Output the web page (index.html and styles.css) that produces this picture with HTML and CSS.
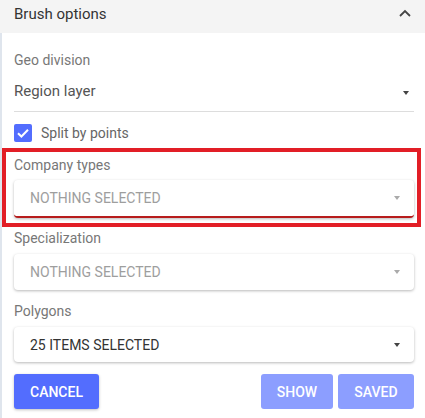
FILE: index.html
```
<!DOCTYPE html>
<html>
<head>
<meta charset="utf-8">
<link rel="stylesheet" href="styles.css">
</head>
<body>
<div class="panel">
  <div class="header">
    <span class="title">Brush options</span>
    <svg class="chevron" width="12" height="8" viewBox="0 0 12 8"><path d="M1 7 L6 2 L11 7" fill="none" stroke="#444" stroke-width="1.8"/></svg>
  </div>
  <div class="content">
    <div class="label first">Geo division</div>
    <div class="plain-select">
      <span class="plain-value">Region layer</span>
      <span class="arrow dark"></span>
    </div>
    <div class="check-row">
      <span class="checkbox"><svg width="18" height="18" viewBox="0 0 18 18"><path d="M4 9.2 L7.4 12.5 L14 5.8" fill="none" stroke="#fff" stroke-width="2"/></svg></span>
      <span class="check-label">Split by points</span>
    </div>
    <div class="highlight">
      <div class="label">Company types</div>
      <div class="select invalid">
        <span class="placeholder">Nothing selected</span>
        <span class="arrow light"></span>
      </div>
    </div>
    <div class="label spec">Specialization</div>
    <div class="select">
      <span class="placeholder">Nothing selected</span>
      <span class="arrow light"></span>
    </div>
    <div class="label poly">Polygons</div>
    <div class="select short">
      <span class="value">25 items selected</span>
      <span class="arrow dark"></span>
    </div>
    <div class="buttons">
      <button class="btn primary">CANCEL</button>
      <div class="right">
        <button class="btn faded show">SHOW</button>
        <button class="btn faded saved">SAVED</button>
      </div>
    </div>
  </div>
</div>
</body>
</html>
```
FILE: styles.css
```
html, body {
  margin: 0;
  padding: 0;
  background: #fff;
}
body {
  font-family: Roboto, "Liberation Sans", sans-serif;
  width: 425px;
  height: 418px;
  overflow: hidden;
}
.panel {
  display: flex;
  flex-direction: column;
  height: 418px;
}
.header {
  height: 33px;
  background: #f4f4f4;
  display: flex;
  align-items: center;
  justify-content: space-between;
  padding: 0 14px;
  flex-shrink: 0;
}
.title {
  font-size: 15px;
  color: #333;
  line-height: 20px;
  margin-top: -6px;
}
.chevron {
  margin-top: -8px;
}
.content {
  flex: 1;
  border-left: 2px solid #dfe5ed;
  padding: 0 11px 0 12px;
  display: flex;
  flex-direction: column;
}
.label {
  font-size: 14px;
  line-height: 16px;
  color: #777;
}
.label.first {
  margin-top: 19px;
}
.plain-select {
  display: flex;
  align-items: center;
  justify-content: space-between;
  padding: 13px 5px 10px 0;
  border-bottom: 1px solid #ddd;
}
.plain-value {
  font-size: 15px;
  line-height: 20px;
  color: #555;
}
.arrow {
  width: 0;
  height: 0;
  border-left: 3.5px solid transparent;
  border-right: 3.5px solid transparent;
  border-top: 4px solid #555;
}
.plain-select .arrow {
  margin-top: 4px;
}
.arrow.dark {
  border-top-color: #444;
}
.arrow.light {
  border-top-color: #aaa;
}
.check-row {
  display: flex;
  align-items: center;
  margin-top: 12px;
  height: 18px;
}
.checkbox {
  width: 18px;
  height: 18px;
  border-radius: 2px;
  background: #536dfe;
  display: block;
}
.checkbox svg {
  display: block;
}
.check-label {
  margin-left: 9px;
  font-size: 14px;
  color: #666;
}
.highlight {
  margin: 6px -7px 0 -12px;
  border: 4px solid #e21e26;
  padding: 5px 3px 5px 8px;
}
.select {
  margin-top: 7px;
  height: 36px;
  background: #fff;
  border-radius: 4px;
  box-shadow: 0 1px 3px rgba(0, 0, 0, 0.28);
  display: flex;
  align-items: center;
  justify-content: space-between;
  padding: 0 14px 0 16px;
  box-sizing: border-box;
}
.select.invalid {
  height: 38px;
  border-bottom: 2px solid #b71c1c;
}
.placeholder {
  text-transform: uppercase;
  font-size: 14px;
  color: #9e9e9e;
}
.value {
  text-transform: uppercase;
  font-size: 14px;
  color: #333;
}
.label.spec {
  margin-top: 3px;
}
.label.spec + .select {
  margin-top: 8px;
}
.label.poly {
  margin-top: 13px;
}
.select.short {
  margin-top: 8px;
  height: 35px;
}
.buttons {
  margin-top: 12px;
  display: flex;
  justify-content: space-between;
}
.right {
  display: flex;
  gap: 5px;
}
.btn {
  height: 35px;
  border: none;
  border-radius: 3px;
  font-family: Roboto, "Liberation Sans", sans-serif;
  font-size: 14px;
  font-weight: 500;
  color: #fff;
  padding: 0 16px;
  cursor: pointer;
}
.btn.primary {
  background: #536dfe;
  box-shadow: 0 1px 3px rgba(0, 0, 0, 0.25);
}
.btn.faded {
  background: #8c9eff;
}
.btn.show {
  width: 72px;
  padding: 0;
}
.btn.saved {
  width: 76px;
  padding: 0;
}
```
